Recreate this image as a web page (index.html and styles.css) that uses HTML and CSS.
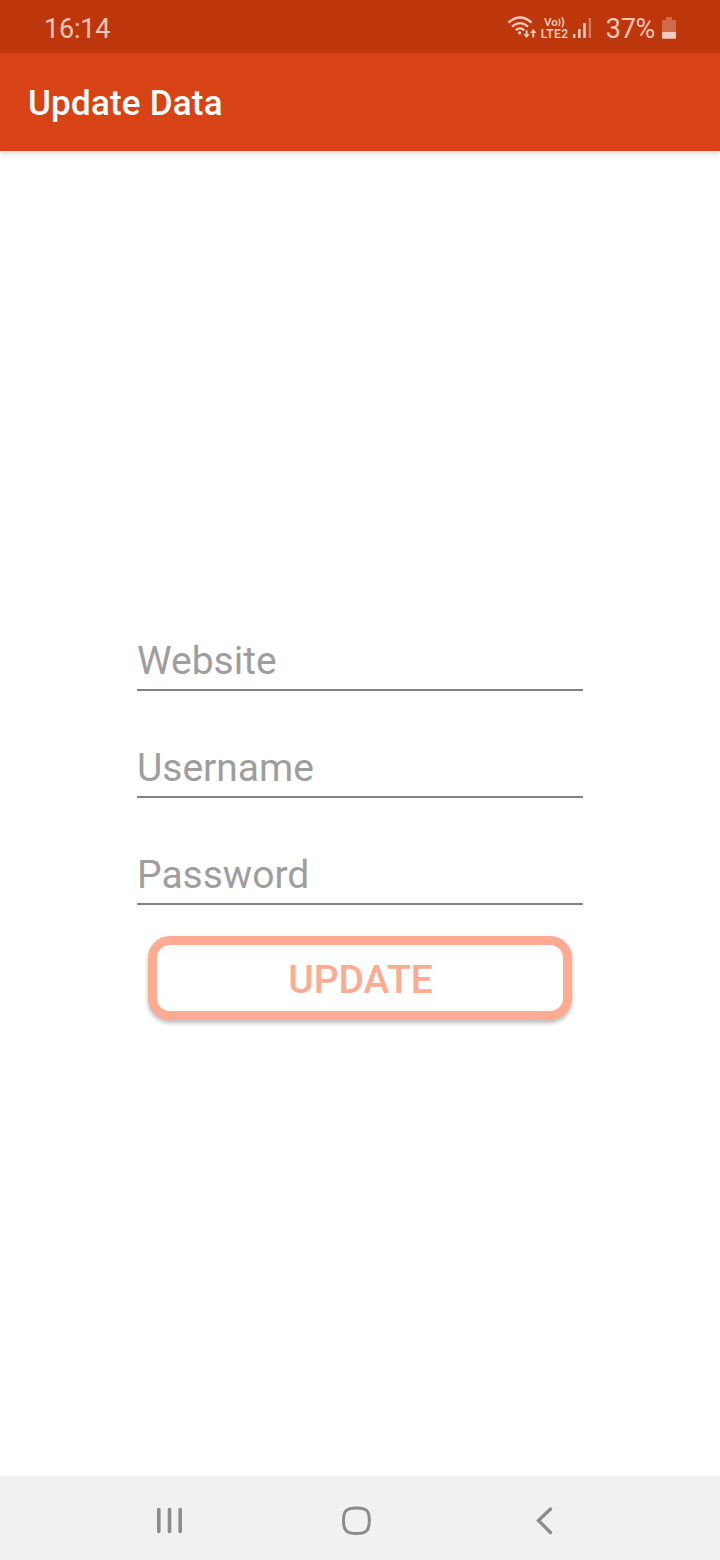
FILE: index.html
```html
<!DOCTYPE html>
<html lang="en">
<head>
<meta charset="utf-8">
<title>Update Data</title>
<link rel="stylesheet" href="styles.css">
</head>
<body>
<div class="screen">
  <div class="status">
    <span class="clock">16:14</span>
    <svg class="signals" width="90" height="53" viewBox="505 0 90 53">
      <g fill="none" stroke="#f9cabc" stroke-width="2.3">
        <path d="M508.4 22.6Q520 12.4 531.6 22.6"/>
        <path d="M512 26.7Q520 19.6 528 26.7"/>
        <path d="M515.7 30.2Q520 26.5 524.3 30.2"/>
        <path d="M526.6 30.5V36.5M533.3 37.5V31.5" stroke-width="2"/>
      </g>
      <circle cx="519.7" cy="32.9" r="1.6" fill="#f9cabc"/>
      <path d="M523.3 34H529.9L526.6 38zM530 33H536.6L533.3 29z" fill="#f9cabc"/>
      <text class="network" x="544" y="26">Vo</text>
      <path d="M558.7 18.8Q561 22.3 558.7 25.800M561.8 17.200Q565.4 22.3 561.8 27.200" fill="none" stroke="#f9cabc" stroke-width="1.5"/>
      <text class="network lte" x="540.7" y="38" textLength="27.3">LTE2</text>
      <path d="M573 34h2.4v4H573zM578 29h2.6v9H578zM583.2 23h2.6v15h-2.6z" fill="#f9cabc"/>
      <path d="M588.6 18h2.5v20h-2.5z" fill="#dc7656"/>
    </svg>
    <span class="percent">37%</span>
    <svg class="battery" width="16" height="24" viewBox="0 0 16 24">
      <path d="M5 1h6v3h3.500q.5 0 .5.5V16H1V4.500q0-.5.5-.5H5z" fill="#d36a4b"/>
      <path d="M1 16h14v6q0 .8-.8.8H1.800Q1 22.800 1 22z" fill="#f1cbc0"/>
    </svg>
  </div>
  <header class="appbar"><h1 class="title">Update Data</h1></header>
  <main class="form">
    <input class="field" type="text" placeholder="Website" aria-label="Website">
    <input class="field" type="text" placeholder="Username" aria-label="Username">
    <input class="field" type="text" placeholder="Password" aria-label="Password">
    <button class="update" type="button">UPDATE</button>
  </main>
  <nav class="navbar">
    <svg width="720" height="84" viewBox="0 0 720 84" fill="none" stroke="#8c8c8c">
      <path d="M158.800 33.500V55.500M169.500 33.500V55.500M180.200 33.500V55.500" stroke-width="3.600" stroke-linecap="round"/>
      <path d="M356.500 32C366.500 32 369.300 34.500 369.300 44.500S366.500 57.500 356.500 57.500 343.500 54.500 343.500 44.500 346.500 32 356.500 32z" stroke-width="3"/>
      <path d="M550.500 33L538.500 44.500L550.500 56.500" stroke-width="3.300" stroke-linecap="round"/>
    </svg>
  </nav>
</div>
</body>
</html>
```
FILE: styles.css
```css
* { box-sizing: border-box; }
body { margin: 0; background: #fff; font-family: Roboto, sans-serif; }
.screen { width: 720px; height: 1560px; display: flex; flex-direction: column; }
.status { height: 53px; flex: none; display: flex; align-items: center; padding: 3px 43px 0 44px; position: relative; z-index: 1; background: #be360c; color: #f9c6b7; font-size: 27px; }
.clock { padding-top: 1px; letter-spacing: -.2px; }
.signals { margin: -3px 11px 0 auto; }
.network { font: 600 11.500px Roboto, sans-serif; fill: #f9cabc; }
.lte { font-size: 12px; }
.percent { padding-top: 1px; letter-spacing: -.3px; }
.battery { margin-left: 6px; }
.appbar { height: 98px; flex: none; display: flex; align-items: center; padding: 3px 28px 0; background: #d84315; box-shadow: 0 2px 7px rgba(0, 0, 0, .18); }
.title { margin: 0; color: #fff; font-size: 35px; font-weight: 500; letter-spacing: .2px; }
.form { flex: 1; display: flex; flex-direction: column; align-items: center; padding-top: 480px; }
.field { width: 446px; height: 60px; margin-bottom: 47px; padding: 2px 0 0; border: 0; border-bottom: 2px solid #808080; border-radius: 0; background: none; font: 400 39px Roboto, sans-serif; outline: 0; }
.field::placeholder { color: #9e9e9e; opacity: 1; }
.update { width: 424px; height: 84px; margin-top: -16px; padding: 4px 0 0 1px; border: 9px solid #ffab91; border-radius: 22px; background: #fff; color: #ffab91; font: 500 39px Roboto, sans-serif; box-shadow: 0 3px 4px rgba(0, 0, 0, .27); }
.navbar { height: 84px; flex: none; background: #f1f1f1; }
.navbar svg { display: block; }
```
